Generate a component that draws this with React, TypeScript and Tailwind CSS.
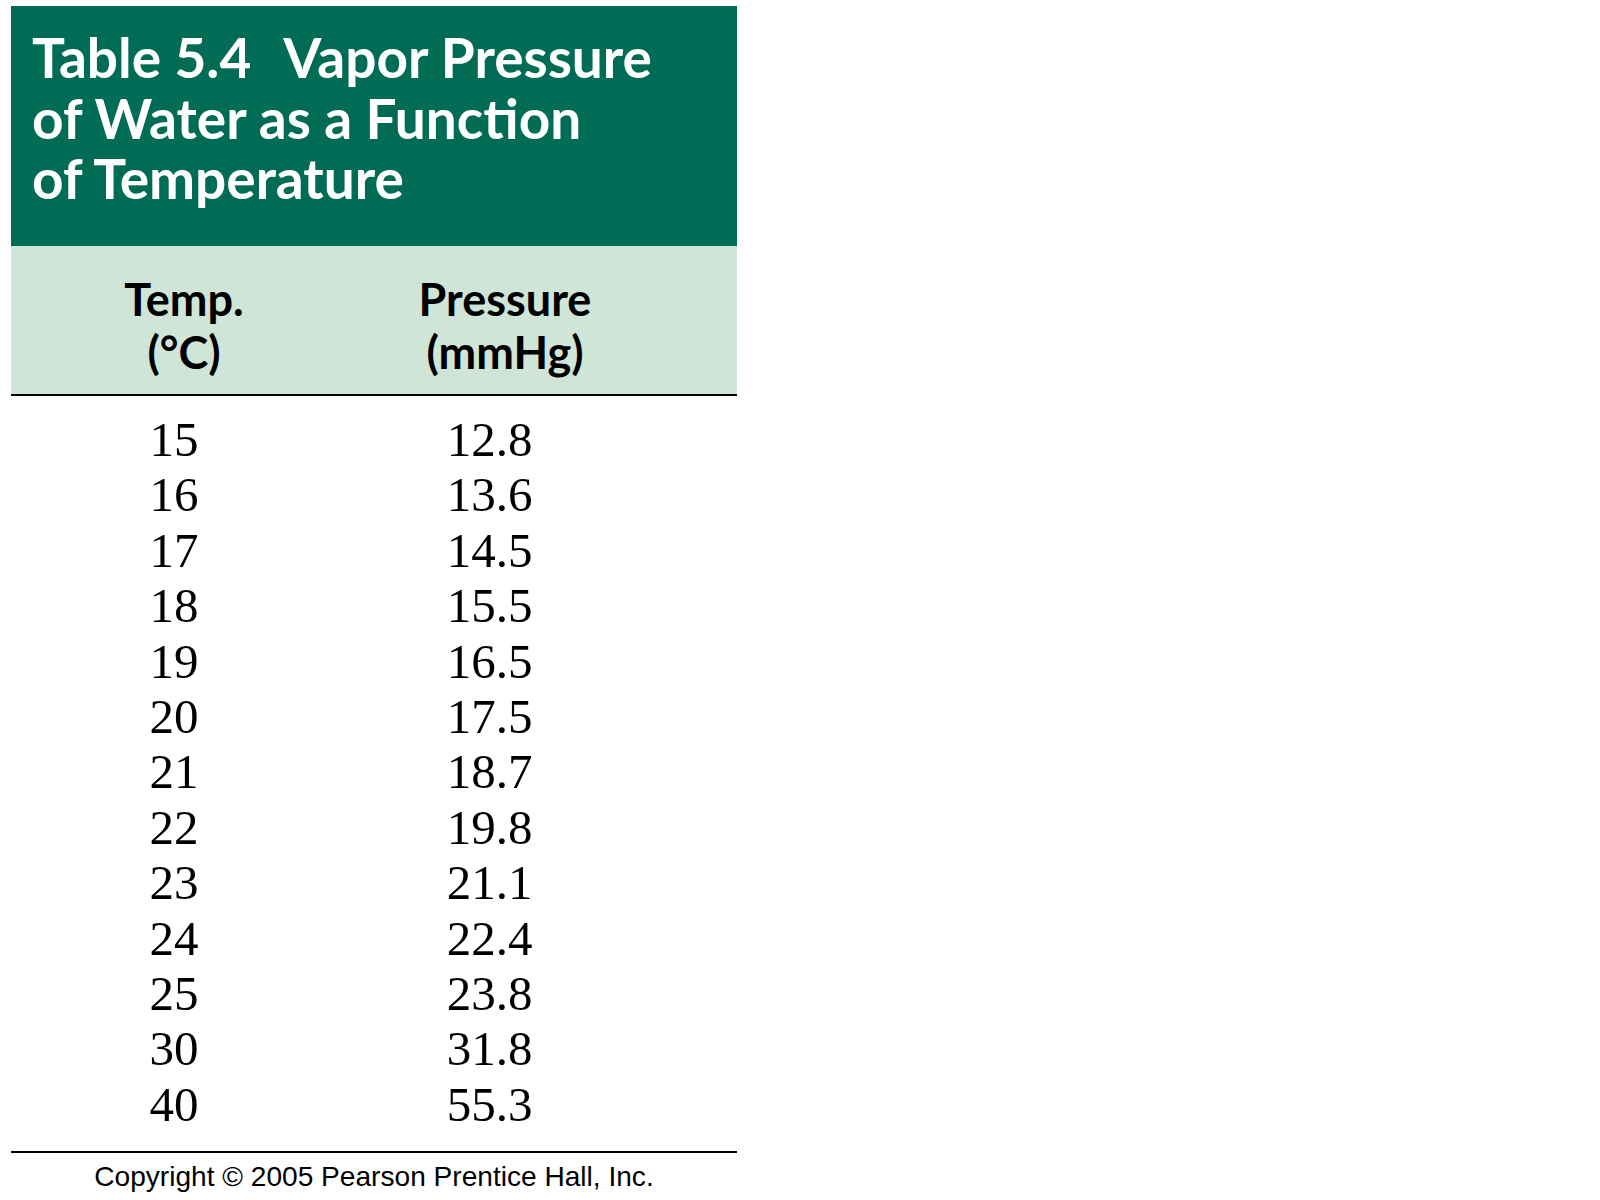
const rows: [string, string][] = [
  ['15', '12.8'],
  ['16', '13.6'],
  ['17', '14.5'],
  ['18', '15.5'],
  ['19', '16.5'],
  ['20', '17.5'],
  ['21', '18.7'],
  ['22', '19.8'],
  ['23', '21.1'],
  ['24', '22.4'],
  ['25', '23.8'],
  ['30', '31.8'],
  ['40', '55.3'],
];

export default function App() {
  return (
    <div className="w-[1600px] h-[1200px] bg-white pl-[11px] pt-[6px]">
      <div className="w-[726px]">
        {/* Title */}
        <div className="h-[240px] bg-[#006c56] pl-[21px] pt-[21px]">
          <h1 className="font-['Lato',sans-serif] font-bold text-white text-[55px] leading-[60.5px]">
            Table 5.4<span className="inline-block w-[32px]" />Vapor Pressure
            <br />
            of Water as a Function
            <br />
            of Temperature
          </h1>
        </div>

        {/* Column headers */}
        <div className="h-[150px] bg-[#cfe5d8] border-b-2 border-black pt-[27px] flex font-['Lato',sans-serif] font-bold text-black text-[45px] leading-[53px]">
          <div className="w-[346px] text-center">
            Temp.
            <br />
            (°C)
          </div>
          <div className="w-[296px] text-center">
            Pressure
            <br />
            (mmHg)
          </div>
        </div>

        {/* Data */}
        <div className="pt-[16px] pb-[19px] border-b-2 border-black font-['Liberation_Serif',serif] text-black text-[49px] leading-[55.4px]">
          {rows.map(([t, p]) => (
            <div key={t} className="flex">
              <div className="w-[326px] text-center">{t}</div>
              <div className="w-[305px] text-center">{p}</div>
            </div>
          ))}
        </div>

        <p className="mt-[8px] text-center font-['Liberation_Sans',Arial,sans-serif] text-[28.1px] leading-[31.7px] text-black">
          Copyright © 2005 Pearson Prentice Hall, Inc.
        </p>
      </div>
    </div>
  );
}
